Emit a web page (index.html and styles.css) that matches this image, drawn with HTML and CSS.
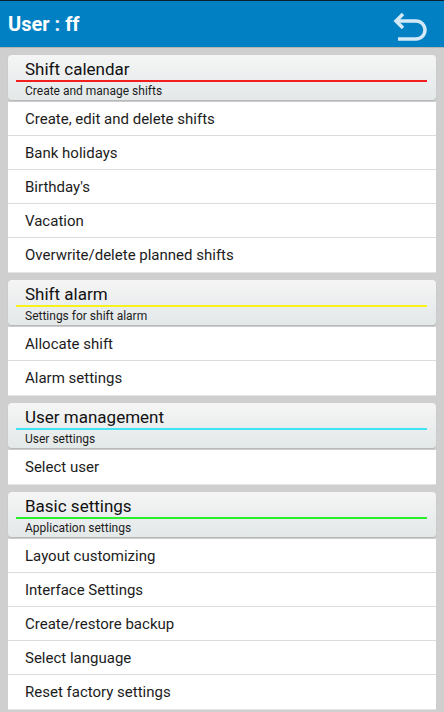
FILE: index.html
```html
<!DOCTYPE html>
<html lang="en">
<head>
<meta charset="UTF-8">
<meta name="viewport" content="width=device-width, initial-scale=1.0">
<title>User : ff</title>
<link rel="stylesheet" href="styles.css">
</head>
<body>
<div class="topbar">
<h1>User : ff</h1>
<svg class="back" width="40" height="34" viewBox="390 4 40 34">
<path d="M396 17 H416 A9 9 0 0 1 416 35 H398" fill="none" stroke="#d4e9f7" stroke-width="3.5"/>
<path d="M403 10 L396 17 L403 24" fill="none" stroke="#d4e9f7" stroke-width="3.5"/>
</svg>
</div>

<div class="content">
<div class="section">
<div class="section-head">
<div class="section-title">Shift calendar</div>
<div class="section-line red"></div>
<div class="section-sub">Create and manage shifts</div>
</div>
<div class="items">
<div class="item">Create, edit and delete shifts</div>
<div class="item">Bank holidays</div>
<div class="item">Birthday's</div>
<div class="item">Vacation</div>
<div class="item">Overwrite/delete planned shifts</div>
</div>
</div>

<div class="section">
<div class="section-head">
<div class="section-title">Shift alarm</div>
<div class="section-line yellow"></div>
<div class="section-sub">Settings for shift alarm</div>
</div>
<div class="items">
<div class="item">Allocate shift</div>
<div class="item">Alarm settings</div>
</div>
</div>

<div class="section">
<div class="section-head">
<div class="section-title">User management</div>
<div class="section-line cyan"></div>
<div class="section-sub">User settings</div>
</div>
<div class="items">
<div class="item">Select user</div>
</div>
</div>

<div class="section">
<div class="section-head">
<div class="section-title">Basic settings</div>
<div class="section-line green"></div>
<div class="section-sub">Application settings</div>
</div>
<div class="items">
<div class="item">Layout customizing</div>
<div class="item">Interface Settings</div>
<div class="item">Create/restore backup</div>
<div class="item">Select language</div>
<div class="item">Reset factory settings</div>
</div>
</div>
</div>
</body>
</html>
```

FILE: styles.css
```css
body {
  margin: 0;
  padding: 0;
  background-color: #cfcfcf;
  font-family: Roboto, "Liberation Sans", sans-serif;
  overflow: hidden;
}

.topbar {
  height: 46px;
  border-top: 1px solid #10202c;
  border-bottom: 1px solid #b4b4b4;
  background-color: #0181c4;
  display: flex;
  align-items: center;
  justify-content: space-between;
  padding: 0 14px 0 8px;
}

.topbar h1 {
  margin: 0;
  color: #fff;
  font-size: 20px;
  font-weight: bold;
}

.back {
  display: block;
  margin-top: 2px;
}

.content {
  padding: 7px 8px 0 8px;
  display: flex;
  flex-direction: column;
  gap: 7px;
}

.section-head {
  height: 45px;
  border-radius: 4px;
  background: linear-gradient(to bottom, #f5f5f5, #e3e8e9);
  box-shadow: 0 1px 1px rgba(0, 0, 0, 0.12);
  padding: 0 9px 0 8px;
}

.section-title {
  height: 25px;
  padding-left: 9px;
  font-size: 17px;
  line-height: 29px;
  color: #111;
}

.section-line {
  height: 2px;
}

.red { background-color: #f21d1d; }
.yellow { background-color: #f7f21a; }
.cyan { background-color: #3ee4f4; }
.green { background-color: #2aef2a; }

.section-sub {
  height: 18px;
  padding-left: 9px;
  font-size: 12px;
  line-height: 19px;
  color: #1c1c1c;
}

.items {
  margin-top: 2px;
  background-color: #fff;
  border-bottom: 1px solid #e4e4e4;
}

.item {
  height: 33px;
  line-height: 35px;
  padding-left: 17px;
  font-size: 15px;
  color: #1c1c1c;
  border-bottom: 1px solid #dcdcdc;
}

.item:last-child {
  height: 34px;
  border-bottom: none;
}
```
